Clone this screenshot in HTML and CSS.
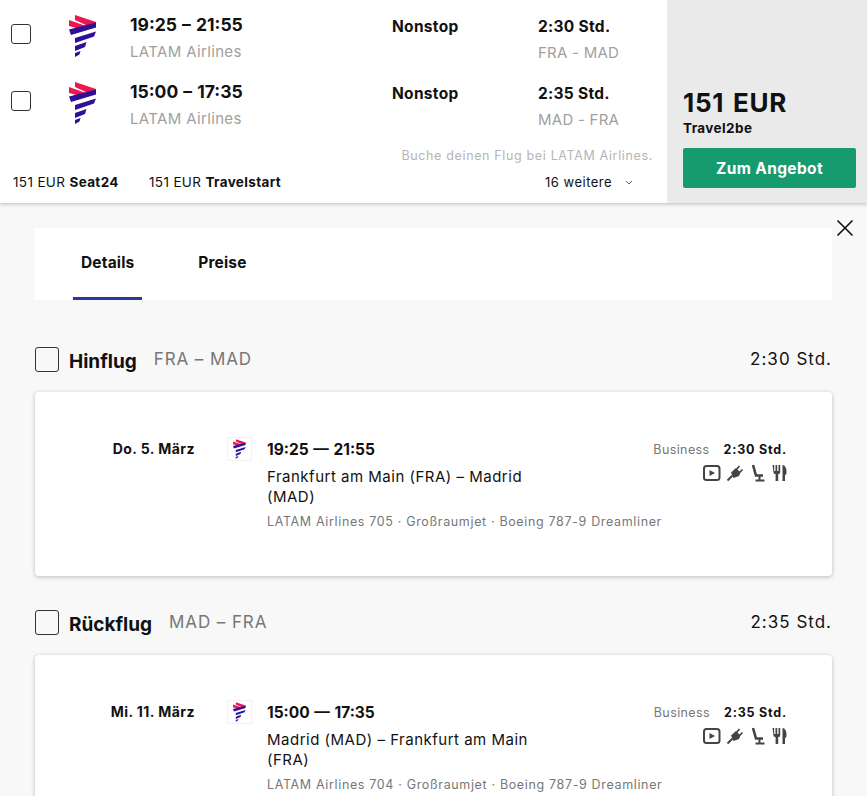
FILE: index.html
```html
<!DOCTYPE html>
<html>
<head>
  <meta charset="UTF-8">
  <title>Flug Details</title>
  <link rel="stylesheet" href="styles.css">
</head>
<body>

  <svg class="sprite" width="0" height="0">
    <symbol id="latam" viewBox="0 0 28 42">
      <polygon fill="#ed1650" points="6,0 27,7 27,9.500 20,11.500 6,5"/>
      <polygon fill="#ed1650" points="0,5 17,11 11,14 0,11"/>
      <polygon fill="#2e0f96" points="0,14.500 27,7.500 27,12.500 2,20"/>
      <polygon fill="#2e0f96" points="6,23 27,16.500 25,21.500 6,28"/>
      <polygon fill="#2e0f96" points="6,31 17.500,27 16,32 6,36"/>
      <polygon fill="#2e0f96" points="6,38 11.500,36 10.500,39.500 6,42"/>
    </symbol>
    <symbol id="amenities" viewBox="0 0 84 18">
      <rect x="1" y="2" width="15.500" height="14" rx="2.500" fill="none" stroke="#444" stroke-width="2"/>
      <polygon points="6.500,6 12,9 6.500,12" fill="#444"/>
      <path d="M24.500 16.500l5-5" stroke="#444" stroke-width="2"/>
      <path d="M28 8.500l5-4.500 4.500 4.500-1.500 3.500-5.500 2z" fill="#444"/>
      <path d="M33 6l3.500-4M36 9l3.500-3.500" stroke="#444" stroke-width="1.700"/>
      <path d="M50 1l3 10.500h7" stroke="#444" stroke-width="2.600" fill="none"/>
      <path d="M56.500 11v5M52.500 16.500h9" stroke="#444" stroke-width="2" fill="none"/>
      <path d="M69.500 1h1.700v6h1.300V1h1.700v6h1.300V1h1.700v7.500q0 1.500-2 1.500v7h-2.600v-7q-2.100 0-2.100-1.500z" fill="#444"/>
      <path d="M79.500 17V1c2.500 0 4 3 4 6.500s-1 3.500-1.500 3.500v6z" fill="#444"/>
    </symbol>
  </svg>

  <div class="result">
    <div class="result-main">
      <div class="flight-row">
        <span class="checkbox"></span>
        <svg class="logo"><use href="#latam"/></svg>
        <div>
          <div class="times">19:25 – 21:55</div>
          <div class="muted">LATAM Airlines</div>
        </div>
        <div class="stops">Nonstop</div>
        <div>
          <div class="duration">2:30 Std.</div>
          <div class="muted">FRA - MAD</div>
        </div>
      </div>
      <div class="flight-row">
        <span class="checkbox"></span>
        <svg class="logo"><use href="#latam"/></svg>
        <div>
          <div class="times">15:00 – 17:35</div>
          <div class="muted">LATAM Airlines</div>
        </div>
        <div class="stops">Nonstop</div>
        <div>
          <div class="duration">2:35 Std.</div>
          <div class="muted">MAD - FRA</div>
        </div>
      </div>
      <div class="book-note">Buche deinen Flug bei LATAM Airlines.</div>
      <div class="other-offers">
        <span class="other-price">151 EUR <b>Seat24</b></span>
        <span class="other-price">151 EUR <b>Travelstart</b></span>
        <span class="more">16 weitere
          <svg class="chevron" viewBox="0 0 8 5"><path d="M1 1l3 3 3-3" fill="none" stroke="#666" stroke-width="1"/></svg>
        </span>
      </div>
    </div>
    <div class="result-side">
      <div class="price">151 EUR</div>
      <div class="provider">Travel2be</div>
      <button class="offer-button">Zum Angebot</button>
    </div>
  </div>

  <div class="details">
    <svg class="close" viewBox="0 0 18 18"><path d="M1.500 1.500l15 15M16.500 1.500l-15 15" stroke="#111" stroke-width="1.600" fill="none"/></svg>

    <div class="tabs">
      <div class="tab active">Details</div>
      <div class="tab">Preise</div>
    </div>

    <div class="leg-head">
      <span class="checkbox big"></span>
      <span class="leg-title">Hinflug</span>
      <span class="leg-route">FRA – MAD</span>
      <span class="leg-time">2:30 Std.</span>
    </div>
    <div class="card">
      <div class="card-date">Do. 5. März</div>
      <div class="logo-box"><svg class="logo-small"><use href="#latam"/></svg></div>
      <div class="card-info">
        <div class="card-times">19:25 — 21:55</div>
        <div class="card-route">Frankfurt am Main (FRA) – Madrid (MAD)</div>
        <div class="card-meta">LATAM Airlines 705 · Großraumjet · Boeing 787-9 Dreamliner</div>
      </div>
      <div class="card-right">
        <div class="card-line"><span class="cabin">Business</span><b class="card-duration">2:30 Std.</b></div>
        <svg class="amenities"><use href="#amenities"/></svg>
      </div>
    </div>

    <div class="leg-head">
      <span class="checkbox big"></span>
      <span class="leg-title">Rückflug</span>
      <span class="leg-route">MAD – FRA</span>
      <span class="leg-time">2:35 Std.</span>
    </div>
    <div class="card">
      <div class="card-date">Mi. 11. März</div>
      <div class="logo-box"><svg class="logo-small"><use href="#latam"/></svg></div>
      <div class="card-info">
        <div class="card-times">15:00 — 17:35</div>
        <div class="card-route">Madrid (MAD) – Frankfurt am Main (FRA)</div>
        <div class="card-meta">LATAM Airlines 704 · Großraumjet · Boeing 787-9 Dreamliner</div>
      </div>
      <div class="card-right">
        <div class="card-line"><span class="cabin">Business</span><b class="card-duration">2:35 Std.</b></div>
        <svg class="amenities"><use href="#amenities"/></svg>
      </div>
    </div>
  </div>

</body>
</html>
```

FILE: styles.css
```css
html, body {
  height: 796px;
  overflow: hidden;
}

body {
  margin: 0;
  padding: 0;
  background-color: #f8f8f8;
  font-family: Inter, sans-serif;
  color: #111;
}

.sprite {
  display: block;
}

.result {
  display: flex;
  height: 203px;
  background: #fff;
  box-shadow: 0 1px 4px rgba(0, 0, 0, 0.25);
  position: relative;
}

.result-main {
  width: 667px;
}

.flight-row {
  display: grid;
  grid-template-columns: 57px 62px 262px 146px 1fr;
  height: 67px;
  padding: 15px 0 0 11px;
  box-sizing: border-box;
}

.checkbox {
  display: block;
  width: 18px;
  height: 18px;
  margin-top: 9px;
  border: 1px solid #333;
  border-radius: 3px;
  background: #fff;
}

.checkbox.big {
  width: 22px;
  height: 23px;
  margin: 0 10px 0 0;
  background: none;
}

.logo {
  width: 28px;
  height: 42px;
  margin-left: 1px;
}

.times {
  font-size: 17.500px;
  font-weight: 700;
  line-height: 20px;
  word-spacing: 1px;
}

.stops,
.duration {
  padding-top: 1px;
  font-size: 15.500px;
  font-weight: 700;
  line-height: 22px;
  letter-spacing: 0.3px;
}

.muted {
  margin-top: 7px;
  font-size: 15px;
  line-height: 20px;
  color: #a0a0a0;
  letter-spacing: 0.35px;
}

.stops + div .muted {
  margin-top: 5px;
  letter-spacing: 0.25px;
}

.book-note {
  margin-top: 14px;
  padding-right: 14px;
  text-align: right;
  font-size: 12.500px;
  line-height: 16px;
  color: #b5b5b5;
  letter-spacing: 0.65px;
}

.other-offers {
  display: flex;
  align-items: center;
  margin-top: 9px;
  padding-left: 13px;
  font-size: 13.500px;
  line-height: 18px;
  letter-spacing: 0.35px;
}

.other-price {
  width: 136px;
}

.more {
  margin-left: 260px;
  font-size: 13px;
  letter-spacing: 0.5px;
}

.chevron {
  width: 8px;
  height: 5px;
  margin-left: 9px;
  vertical-align: 2px;
}

.result-side {
  width: 200px;
  padding: 87px 11px 0 16px;
  box-sizing: border-box;
  background: #eaeaea;
}

.price {
  font-size: 26px;
  font-weight: 700;
  line-height: 32px;
  letter-spacing: 0.7px;
  word-spacing: 2px;
}

.provider {
  font-size: 13.500px;
  font-weight: 700;
  line-height: 18px;
  letter-spacing: 0.4px;
}

.offer-button {
  display: block;
  width: 100%;
  height: 40px;
  margin-top: 11px;
  border: none;
  border-radius: 2px;
  background-color: #169b6f;
  color: #fff;
  font-family: inherit;
  font-size: 15.500px;
  font-weight: 700;
  letter-spacing: 0.35px;
}

.details {
  position: relative;
  padding: 25px 35px 0;
}

.close {
  position: absolute;
  top: 16px;
  right: 13px;
  width: 18px;
  height: 18px;
}

.tabs {
  display: flex;
  height: 72px;
  padding-left: 38px;
  background: #fff;
}

.tab {
  padding: 25px 8px 0;
  margin-right: 48px;
  font-size: 15.500px;
  font-weight: 700;
  line-height: 20px;
  letter-spacing: 0.15px;
}

.tab.active {
  border-bottom: 3px solid #2b3a97;
  height: 44px;
}

.leg-head {
  display: flex;
  align-items: center;
  height: 25px;
  margin-top: 47px;
}

.card + .leg-head {
  margin-top: 34px;
}

.leg-title {
  font-size: 19px;
  font-weight: 700;
  margin-top: 3px;
}

.leg-route {
  margin-left: 17px;
  font-size: 17px;
  color: #777;
  margin-top: -2px;
  letter-spacing: 0.9px;
}

.leg-time {
  margin-left: auto;
  font-size: 17px;
  margin-top: -2px;
  letter-spacing: 1px;
}

.card {
  display: flex;
  height: 184px;
  margin-top: 20px;
  padding: 45px 45px 0 0;
  box-sizing: border-box;
  background: #fff;
  border-radius: 4px;
  box-shadow: 0 1px 4px rgba(0, 0, 0, 0.25);
}

.card-date {
  flex-shrink: 0;
  width: 160px;
  padding-top: 2px;
  text-align: right;
  font-size: 14px;
  font-weight: 700;
  line-height: 20px;
  letter-spacing: 0.45px;
}

.logo-box {
  display: flex;
  align-items: center;
  justify-content: center;
  flex-shrink: 0;
  width: 25px;
  height: 24px;
  margin: 0 15px 0 32px;
  border: 1px solid #f2f2f2;
  box-sizing: border-box;
}

.logo-small {
  width: 13px;
  height: 20px;
}

.card-info {
  flex-shrink: 0;
  width: 380px;
  padding-top: 1px;
}

.card-times {
  padding-top: 2px;
  font-size: 15.500px;
  font-weight: 700;
  line-height: 20px;
  word-spacing: 1px;
}

.card-route {
  width: 270px;
  margin-top: 7px;
  font-size: 15px;
  line-height: 20px;
  letter-spacing: 0.5px;
}

.card-meta {
  margin-top: 6px;
  font-size: 12.500px;
  line-height: 18px;
  color: #777;
  letter-spacing: 0.65px;
  white-space: nowrap;
}

.card-right {
  flex-shrink: 0;
  margin-left: auto;
  padding-top: 4px;
  text-align: right;
  font-size: 12.500px;
  line-height: 18px;
}

.card-line {
  white-space: nowrap;
}

.cabin {
  color: #777;
  letter-spacing: 0.4px;
}

.card-duration {
  margin-left: 14px;
  letter-spacing: 0.8px;
}

.amenities {
  display: block;
  width: 84px;
  height: 18px;
  margin: 5px 0 0 auto;
}
```
